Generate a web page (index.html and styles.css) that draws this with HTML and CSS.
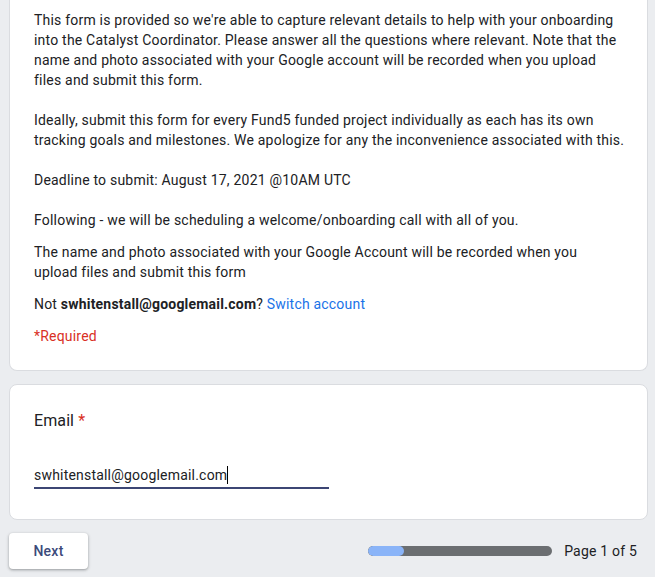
FILE: index.html
```
<!DOCTYPE html>
<html>
<head>
<meta charset="utf-8">
<link rel="stylesheet" href="styles.css">
</head>
<body>
<div class="page">
  <div class="card card-head">
    <div class="desc">This form is provided so we're able to capture relevant details to help with your onboarding into the Catalyst Coordinator. Please answer all the questions where relevant. Note that the name and photo associated with your Google account will be recorded when you upload files and submit this form.

Ideally, submit this form for every Fund5 funded project individually as each has its own tracking goals and milestones. We apologize for any the inconvenience associated with this.

Deadline to submit: August 17, 2021 @10AM UTC

Following - we will be scheduling a welcome/onboarding call with all of you.</div>
    <p class="note">The name and photo associated with your Google Account will be recorded when you upload files and submit this form</p>
    <p class="note">Not <b>swhitenstall@googlemail.com</b>? <a class="link" href="#">Switch account</a></p>
    <p class="required">*Required</p>
  </div>
  <div class="card card-q">
    <div class="q-title">Email <span class="star">*</span></div>
    <div class="input"><span class="value">swhitenstall@googlemail.com</span><span class="caret"></span></div>
  </div>
  <div class="footer">
    <button class="next">Next</button>
    <div class="progress"><div class="fill"></div></div>
    <div class="pagenum">Page 1 of 5</div>
  </div>
</div>
</body>
</html>
```

FILE: styles.css
```
html, body {
  margin: 0;
  padding: 0;
}
body {
  background: #ebedf0;
  font-family: Roboto, "Liberation Sans", Arial, sans-serif;
  color: #202124;
  font-size: 14px;
  letter-spacing: 0.2px;
}
.page {
  padding: 0 7px 0 9px;
}
.card {
  background: #fff;
  border: 1px solid #dadce0;
  border-radius: 8px;
}
.card-head {
  border-top: none;
  border-radius: 0 0 8px 8px;
  padding: 10px 22px 23px 24px;
}
.desc {
  white-space: pre-wrap;
  line-height: 20px;
  letter-spacing: 0.21px;
}
.note {
  margin: 12px 4px 0 0;
  line-height: 20px;
}
.note b {
  font-weight: 700;
}
.link {
  color: #1a73e8;
  text-decoration: none;
}
.required {
  margin: 12px 0 0;
  line-height: 21px;
  color: #d93025;
}
.card-q {
  margin-top: 13px;
  padding: 24px 24px 30px;
}
.q-title {
  font-size: 16px;
  line-height: 24px;
  letter-spacing: 0.1px;
}
.star {
  color: #d93025;
}
.input {
  margin-top: 32px;
  width: 295px;
  border-bottom: 2px solid #3c4674;
  padding-bottom: 2px;
  display: flex;
  align-items: center;
  line-height: 20px;
  font-size: 14px;
}
.caret {
  display: inline-block;
  width: 1px;
  height: 18px;
  background: #000;
}
.footer {
  margin-top: 13px;
  display: flex;
  align-items: center;
  padding-right: 11px;
  padding-bottom: 8px;
}
.next {
  width: 79px;
  height: 36px;
  background: #fff;
  border: none;
  border-radius: 4px;
  box-shadow: 0 1px 2px rgba(60,64,67,0.3), 0 1px 3px 1px rgba(60,64,67,0.15);
  font-family: Roboto, "Liberation Sans", Arial, sans-serif;
  font-size: 14px;
  font-weight: 500;
  color: #3c4a7a;
  letter-spacing: 0.25px;
  padding: 0;
}
.progress {
  margin-left: auto;
  width: 184px;
  height: 10px;
  border-radius: 5px;
  background: #6b6e71;
  overflow: hidden;
}
.fill {
  width: 36px;
  height: 100%;
  background: #8ab4f8;
  border-radius: 5px;
}
.pagenum {
  margin-left: 12px;
  line-height: 20px;
}
```
